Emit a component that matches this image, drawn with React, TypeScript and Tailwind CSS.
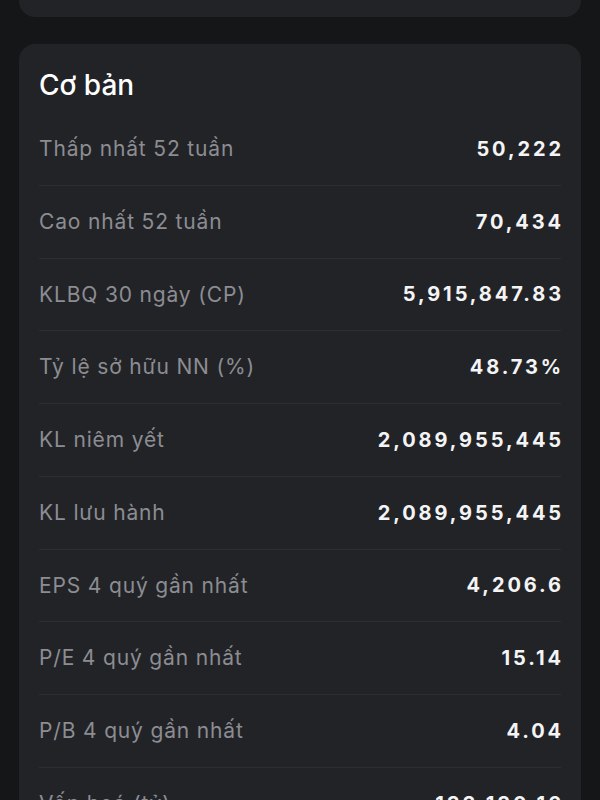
const rows = [
  { label: "Thấp nhất 52 tuần", value: "50,222" },
  { label: "Cao nhất 52 tuần", value: "70,434" },
  { label: "KLBQ 30 ngày (CP)", value: "5,915,847.83" },
  { label: "Tỷ lệ sở hữu NN (%)", value: "48.73%" },
  { label: "KL niêm yết", value: "2,089,955,445" },
  { label: "KL lưu hành", value: "2,089,955,445" },
  { label: "EPS 4 quý gần nhất", value: "4,206.6" },
  { label: "P/E 4 quý gần nhất", value: "15.14" },
  { label: "P/B 4 quý gần nhất", value: "4.04" },
  { label: "Vốn hoá (tỷ)", value: "133,130.16" },
];

export default function App() {
  return (
    <div className="h-[800px] overflow-hidden bg-[#151618] font-['Inter',sans-serif]">
      {/* bottom of the previous card */}
      <div className="mx-[19px] h-[17px] rounded-b-[16px] bg-[#222327]" />

      <div className="mx-[19px] mt-[27px] rounded-[16px] bg-[#222327] px-[20px] pt-[25px]">
        <h2 className="mb-[12px] text-[28px] font-medium leading-[32px] text-white">
          Cơ bản
        </h2>
        <div>
          {rows.map((row) => (
            <div
              key={row.label}
              className="flex h-[72.75px] items-center justify-between border-b border-[#2d2e32]"
            >
              <span className="text-[21px] tracking-[0.04em] text-[#8c8d92]">
                {row.label}
              </span>
              <span className="-mr-[3px] text-[20px] font-bold tracking-[0.145em] text-[#f4f4f5]">
                {row.value}
              </span>
            </div>
          ))}
        </div>
      </div>
    </div>
  );
}
